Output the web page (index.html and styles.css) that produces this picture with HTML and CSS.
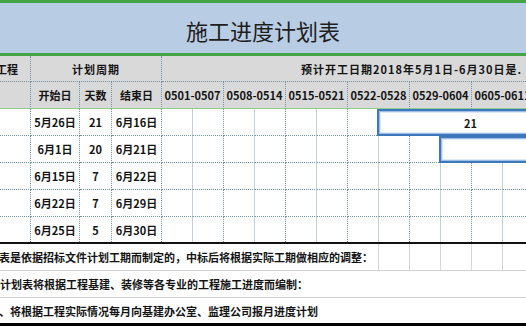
FILE: index.html
```html
<!DOCTYPE html>
<html lang="zh">
<head>
<meta charset="utf-8">
<title>施工进度计划表</title>
<link rel="stylesheet" href="styles.css">
</head>
<body>
<div class="sheet">
  <div class="topline"></div>
  <div class="title">施工进度计划表</div>

  <div class="row hdr hdr1">
    <div class="c name">工程</div>
    <div class="c s3 spaced">计划周期</div>
    <div class="c s12 plan">预计开工日期2018年5月1日-6月30日是.</div>
  </div>
  <div class="row hdr hdr2">
    <div class="c"></div>
    <div class="c">开始日</div>
    <div class="c">天数</div>
    <div class="c">结束日</div>
    <div class="c s2">0501-0507</div>
    <div class="c s2">0508-0514</div>
    <div class="c s2">0515-0521</div>
    <div class="c s2">0522-0528</div>
    <div class="c s2">0529-0604</div>
    <div class="c s2">0605-0611</div>
  </div>

  <div class="row body">
    <div class="c"></div><div class="c">5月26日</div><div class="c">21</div><div class="c">6月16日</div>
    <div class="c h1"></div><div class="c"></div><div class="c h1"></div><div class="c"></div>
    <div class="c h1"></div><div class="c"></div><div class="c h1"></div><div class="c"></div>
    <div class="c h1"></div><div class="c"></div><div class="c h1"></div><div class="c"></div>
    <div class="bar" style="left:377px;width:187px">21</div>
  </div>
  <div class="row body">
    <div class="c"></div><div class="c">6月1日</div><div class="c">20</div><div class="c">6月21日</div>
    <div class="c h1"></div><div class="c"></div><div class="c h1"></div><div class="c"></div>
    <div class="c h1"></div><div class="c"></div><div class="c h1"></div><div class="c"></div>
    <div class="c h1"></div><div class="c"></div><div class="c h1"></div><div class="c"></div>
    <div class="bar" style="left:439px;width:200px">20</div>
  </div>
  <div class="row body">
    <div class="c"></div><div class="c">6月15日</div><div class="c">7</div><div class="c">6月22日</div>
    <div class="c h1"></div><div class="c"></div><div class="c h1"></div><div class="c"></div>
    <div class="c h1"></div><div class="c"></div><div class="c h1"></div><div class="c"></div>
    <div class="c h1"></div><div class="c"></div><div class="c h1"></div><div class="c"></div>
  </div>
  <div class="row body">
    <div class="c"></div><div class="c">6月22日</div><div class="c">7</div><div class="c">6月29日</div>
    <div class="c h1"></div><div class="c"></div><div class="c h1"></div><div class="c"></div>
    <div class="c h1"></div><div class="c"></div><div class="c h1"></div><div class="c"></div>
    <div class="c h1"></div><div class="c"></div><div class="c h1"></div><div class="c"></div>
  </div>
  <div class="row body last">
    <div class="c"></div><div class="c">6月25日</div><div class="c">5</div><div class="c">6月30日</div>
    <div class="c h1"></div><div class="c"></div><div class="c h1"></div><div class="c"></div>
    <div class="c h1"></div><div class="c"></div><div class="c h1"></div><div class="c"></div>
    <div class="c h1"></div><div class="c"></div><div class="c h1"></div><div class="c"></div>
  </div>

  <div class="row note">
    <div class="n s11"><span class="t t1">表是依据招标文件计划工期而制定的，中标后将根据实际工期做相应的调整：</span></div>
    <div class="n g"></div><div class="n g"></div><div class="n g"></div><div class="n g"></div><div class="n"></div>
  </div>
  <div class="row note">
    <div class="n s16"><span class="t t2">计划表将根据工程基建、装修等各专业的工程施工进度而编制：</span></div>
  </div>
  <div class="row note endnote">
    <div class="n s16"><span class="t t3">、将根据工程实际情况每月向基建办公室、监理公司报月进度计划</span></div>
  </div>
</div>
</body>
</html>
```

FILE: styles.css
```css
* {
  box-sizing: border-box;
  margin: 0;
  padding: 0;
}

html, body {
  width: 526px;
  height: 326px;
  overflow: hidden;
  background: #ffffff;
}

body {
  font-family: "Noto Sans CJK SC", "Noto Sans", sans-serif;
  color: #141414;
}

.sheet {
  width: 526px;
  height: 326px;
  overflow: hidden;
}

.topline {
  height: 3px;
  background: #45a545;
}

.title {
  height: 53px;
  background: #b8cce4;
  border-bottom: 3px solid #45a545;
  display: flex;
  align-items: center;
  justify-content: center;
  padding-top: 4px;
  font-size: 22px;
  font-weight: 400;
  color: #1e1e1e;
  width: 526px;
}

.row {
  display: grid;
  grid-template-columns: 31px 49px 32px 50px repeat(12, 31px);
  width: 534px;
  position: relative;
  font-size: 11px;
  font-weight: 700;
}

.c {
  display: flex;
  align-items: center;
  justify-content: center;
  white-space: nowrap;
  border-right: 1px dotted #6f92a4;
  border-bottom: 1px dotted #6f92a4;
}

.s2 { grid-column: span 2; }
.s3 { grid-column: span 3; }
.s11 { grid-column: span 11; }
.s12 { grid-column: span 12; }
.s16 { grid-column: span 16; }

.hdr {
  background: #d9d9d9;
}

.hdr1 {
  height: 26px;
}

.hdr2 {
  height: 27px;
}

.hdr2 .c {
  border-bottom: 1px solid #8fca8f;
}

.name {
  justify-content: flex-end;
  padding-right: 12px;
}

.spaced {
  letter-spacing: 1px;
}

.plan {
  justify-content: flex-end;
  padding-right: 12px;
  border-right: none;
  letter-spacing: 1px;
}

.body {
  height: 27px;
  background: #ffffff;
}

.body .h1 {
  border-right: 1px solid #c3d0d6;
}

.last {
  border-bottom: 2px solid #111111;
}

.last .c {
  border-bottom: none;
}

.bar {
  position: absolute;
  top: 0;
  height: 27px;
  background: #ffffff;
  border: 2px solid #3f78ba;
  box-shadow: inset 0 0 0 1px #9dbfe6, inset 0 0 0 2px #dde9f6;
  display: flex;
  align-items: center;
  justify-content: center;
  font-size: 11px;
  font-weight: 700;
  color: #1a1a1a;
}

.note {
  height: 27px;
  border-bottom: 1px solid #d3d3d3;
}

.endnote {
  height: 28px;
  border-bottom: 3px solid #000000;
}

.n {
  display: flex;
  align-items: center;
  white-space: nowrap;
}

.s11 {
  border-right: 1px solid #d6d6d6;
}

.g {
  border-right: 1px solid #d6d6d6;
}

.t {
  display: block;
}

.t1 {
  margin-left: -1px;
}

.t2 {
  margin-left: 0;
}

.t3 {
  margin-left: -1px;
}
```
